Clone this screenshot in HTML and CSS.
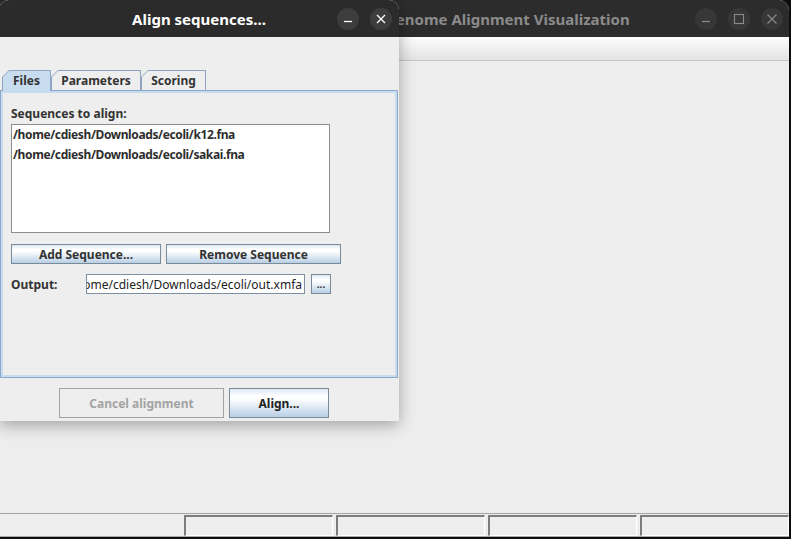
FILE: index.html
```html
<!DOCTYPE html>
<html>
<head>
<meta charset="utf-8">
<link rel="stylesheet" href="styles.css">
</head>
<body>
<div class="desktop">
  <div class="main-win">
    <div class="titlebar main-title">
      <span class="title">Genome Alignment Visualization</span>
      <div class="wbtns">
        <span class="wbtn"><svg width="12" height="12" viewBox="0 0 12 12"><path d="M2 8.5h8" stroke="#8a8a8a" stroke-width="1.2"/></svg></span>
        <span class="wbtn"><svg width="12" height="12" viewBox="0 0 12 12"><rect x="1.5" y="1.5" width="9" height="9" fill="none" stroke="#8a8a8a" stroke-width="1.1"/></svg></span>
        <span class="wbtn"><svg width="12" height="12" viewBox="0 0 12 12"><path d="M1.5 1.5l9 9M10.5 1.5l-9 9" stroke="#8a8a8a" stroke-width="1.2"/></svg></span>
      </div>
    </div>
    <div class="toolbar"></div>
    <div class="content"></div>
    <div class="statusbar">
      <div class="cell first"></div>
      <div class="cell sunken"></div>
      <div class="cell sunken"></div>
      <div class="cell sunken"></div>
      <div class="cell sunken"></div>
    </div>
  </div>

  <div class="dialog">
    <div class="titlebar dlg-title">
      <span class="title">Align sequences...</span>
      <div class="wbtns">
        <span class="wbtn"><svg width="12" height="12" viewBox="0 0 12 12"><path d="M2 8.5h8" stroke="#ffffff" stroke-width="1.3"/></svg></span>
        <span class="wbtn"><svg width="12" height="12" viewBox="0 0 12 12"><path d="M2 2l8 8M10 2l-8 8" stroke="#ffffff" stroke-width="1.3"/></svg></span>
      </div>
    </div>
    <div class="dlg-body">
      <div class="tabs">
        <div class="tab sel tab-files"><div class="tab-in">Files</div></div>
        <div class="tab tab-params"><div class="tab-in">Parameters</div></div>
        <div class="tab tab-scoring"><div class="tab-in">Scoring</div></div>
      </div>
      <div class="panel">
        <div class="label">Sequences to align:</div>
        <div class="list">
          <div class="list-item">/home/cdiesh/Downloads/ecoli/k12.fna</div>
          <div class="list-item">/home/cdiesh/Downloads/ecoli/sakai.fna</div>
        </div>
        <div class="btn-row">
          <button class="btn add">Add Sequence...</button>
          <button class="btn remove">Remove Sequence</button>
        </div>
        <div class="output-row">
          <span class="output-label">Output:</span>
          <div class="field"><span>/home/cdiesh/Downloads/ecoli/out.xmfa</span></div>
          <button class="btn browse">...</button>
        </div>
      </div>
      <div class="dlg-footer">
        <button class="btn cancel" disabled>Cancel alignment</button>
        <button class="btn align">Align...</button>
      </div>
    </div>
  </div>
</div>
</body>
</html>
```

FILE: styles.css
```css
* { box-sizing: border-box; }

body {
  margin: 0;
  background: #0e0e0e;
  font-family: "Noto Sans", "DejaVu Sans", sans-serif;
}

.desktop {
  position: relative;
  width: 791px;
  height: 539px;
  overflow: hidden;
  background: #0d0d0d;
}

/* ---------- main window ---------- */
.main-win {
  position: absolute;
  left: -222px;
  top: 0;
  width: 1011px;
  height: 537px;
  display: flex;
  flex-direction: column;
  background: #ededed;
  border-radius: 10px 10px 0 0;
  overflow: hidden;
}

.titlebar {
  height: 37px;
  flex: none;
  display: flex;
  align-items: center;
  justify-content: center;
  position: relative;
}

.title {
  font-family: "Noto Sans", sans-serif;
  font-weight: bold;
  font-size: 15px;
  white-space: nowrap;
}

.main-title {
  background: #2c2c2c;
  justify-content: flex-start;
  padding-left: 607px;
}
.main-title .title { color: #8b8b8b; }

.wbtns {
  position: absolute;
  top: 8px;
  display: flex;
  gap: 11px;
}
.main-title .wbtns { right: 6px; }

.wbtn {
  width: 22px;
  height: 22px;
  border-radius: 50%;
  display: flex;
  align-items: center;
  justify-content: center;
}
.main-title .wbtn { background: #373737; }

.toolbar {
  height: 24px;
  flex: none;
  background: linear-gradient(#fdfdfd, #e3e3e3);
  border-bottom: 1px solid #c6c6c6;
}

.content { flex: 1; background: #ededed; }

.statusbar {
  height: 24px;
  flex: none;
  display: flex;
  border-top: 1px solid #a3a3a3;
  border-bottom: 1px solid #a9a9a9;
  background: #eeeeee;
}
.cell.first { flex: 1; }
.cell.sunken {
  width: 149px;
  margin-left: 3px;
  margin-top: 1px;
  border-top: 2px solid #7c7c7c;
  border-left: 2px solid #7c7c7c;
  border-right: 1px solid #ffffff;
  border-bottom: 1px solid #ffffff;
}

/* ---------- dialog ---------- */
.dialog {
  position: absolute;
  left: -1px;
  top: 0;
  width: 400px;
  height: 421px;
  background: #eeeeee;
  border-radius: 10px 10px 0 0;
  box-shadow: 0 4px 16px rgba(0, 0, 0, 0.32);
  display: flex;
  flex-direction: column;
}

.dlg-title {
  background: #2b2b2b;
  border-radius: 10px 10px 0 0;
}
.dlg-title .title { color: #ffffff; }
.dlg-title .wbtns { right: 7px; }
.dlg-title .wbtn { background: #3d3d3d; }

.dlg-body {
  flex: 1;
  display: flex;
  flex-direction: column;
  padding: 33px 1px 0 1px;
  font-size: 12px;
  color: #333333;
}

.tabs {
  display: flex;
  align-items: flex-start;
  height: 20px;
  padding-left: 2px;
}

.tab {
  height: 20px;
  padding: 1px 1px 0 1px;
  background: #8fa3c2;
  clip-path: polygon(7px 0, 100% 0, 100% 100%, 0 100%, 0 7px);
}
.tab.sel {
  height: 21px;
  position: relative;
  z-index: 2;
}
.tab-in {
  height: 100%;
  background: #eeeeee;
  clip-path: polygon(6px 0, 100% 0, 100% 100%, 0 100%, 0 6px);
  display: flex;
  align-items: center;
  justify-content: center;
  font-weight: bold;
  font-size: 12px;
  color: #333333;
  padding-bottom: 1px;
}
.tab.sel .tab-in { background: #c8dcf0; padding-bottom: 2px; }
.tab-files { width: 49px; }
.tab-params { width: 90px; }
.tab-scoring { width: 65px; }

.panel {
  height: 288px;
  border: 1px solid #8ca7c9;
  box-shadow: inset 0 0 0 2px #c8dcf0;
  padding: 15px 10px 0 10px;
}

.label {
  line-height: 16px;
  font-weight: bold;
}

.list {
  margin-top: 2px;
  width: 319px;
  height: 109px;
  background: #ffffff;
  border: 1px solid #8d8d8d;
}
.list-item {
  line-height: 20px;
  padding-left: 1px;
  font-weight: bold;
  color: #2e2e2e;
  letter-spacing: -0.38px;
  white-space: nowrap;
}

.btn {
  font-family: "Noto Sans", "DejaVu Sans", sans-serif;
  font-size: 12px;
  font-weight: bold;
  color: #333333;
  border: 1px solid #7a8a99;
  background: linear-gradient(#dde8f3 0%, #ffffff 25%, #ffffff 35%, #b8cfe5 100%);
  padding: 0;
  margin: 0;
  display: flex;
  align-items: center;
  justify-content: center;
}

.btn-row {
  margin-top: 11px;
  display: flex;
  gap: 5px;
}
.btn-row .btn { height: 20px; }
.add { width: 150px; }
.remove { width: 175px; }

.output-row {
  margin-top: 10px;
  display: flex;
  align-items: center;
  height: 20px;
}
.output-label {
  width: 75px;
  font-weight: bold;
}
.field {
  width: 219px;
  height: 20px;
  border: 1px solid #7d8fa3;
  background: #ffffff;
  overflow: hidden;
  display: flex;
  align-items: center;
  justify-content: flex-end;
  padding-right: 2px;
  white-space: nowrap;
  color: #222222;
}
.browse {
  margin-left: 6px;
  width: 20px;
  height: 20px;
  font-size: 10px;
  align-items: flex-end;
  padding-bottom: 2px;
}

.dlg-footer {
  flex: 1;
  display: flex;
  gap: 5px;
  padding: 10px 0 0 59px;
}
.dlg-footer .btn { height: 30px; }
.cancel {
  width: 165px;
  background: #eeeeee;
  border-color: #a3a3a3;
  color: #a3a3a3;
}
.align { width: 100px; color: #222222; }
```
